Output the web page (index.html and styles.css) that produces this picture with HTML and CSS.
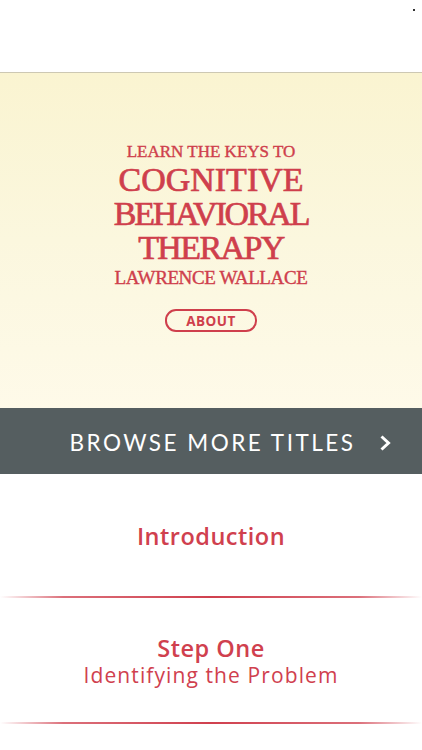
FILE: index.html
```html
<!DOCTYPE html>
<html>
<head>
<meta charset="utf-8">
<link rel="stylesheet" href="styles.css">
</head>
<body>
<div class="app">
  <header class="status"><span class="dot"></span></header>
  <section class="hero">
    <div class="title">
      <div class="t-small">LEARN THE KEYS TO</div>
      <div class="t-big t-cog">COGNITIVE</div>
      <div class="t-big t-beh">BEHAVIORAL</div>
      <div class="t-big t-the">THERAPY</div>
      <div class="t-author">LAWRENCE WALLACE</div>
    </div>
    <a class="about">ABOUT</a>
  </section>
  <a class="browse">
    <span class="browse-text">BROWSE MORE TITLES</span>
    <svg class="chev" width="13" height="16" viewBox="0 0 13 16"><path d="M2.5 1.5 L9.5 8 L2.5 14.5" fill="none" stroke="#ffffff" stroke-width="3" stroke-linejoin="miter"/></svg>
  </a>
  <ul class="chapters">
    <li class="chapter ch-intro"><span class="ch-title">Introduction</span></li>
    <li class="divider"></li>
    <li class="chapter ch-step"><span class="ch-title">Step One</span><span class="ch-sub">Identifying the Problem</span></li>
    <li class="divider"></li>
  </ul>
</div>
</body>
</html>
```

FILE: styles.css
```css
* { box-sizing: border-box; }
html, body { margin: 0; padding: 0; background: #ffffff; }
body { width: 422px; height: 750px; overflow: hidden; font-family: "Open Sans", "Liberation Sans", sans-serif; }
.app { width: 422px; }

.status { position: relative; height: 73px; background: #ffffff; border-bottom: 1px solid #cdc8b3; }
.dot { position: absolute; left: 413px; top: 9px; width: 2px; height: 2px; background: #333; }

.hero {
  height: 335px;
  background: linear-gradient(to bottom, #faf4d1 0%, #fbf7de 50%, #fefae9 100%);
  padding-top: 69px;
  text-align: center;
  color: #cf3f4c;
  font-family: "Liberation Serif", serif;
  -webkit-text-stroke: 0.4px #cf3f4c;
}
.t-small { font-size: 17px; line-height: 20px; letter-spacing: 0px; margin-bottom: 1px; }
.t-big { font-size: 34px; line-height: 34px; -webkit-text-stroke: 0.7px #cf3f4c; }
.t-cog { letter-spacing: 0px; }
.t-beh { letter-spacing: -2.2px; }
.t-the { letter-spacing: -1.6px; }
.t-author { font-size: 19px; line-height: 24px; letter-spacing: -0.4px; margin-top: 1px; }

.about {
  display: inline-flex; align-items: center; justify-content: center;
  margin-top: 19px;
  width: 92px; height: 23px;
  border: 2px solid #cf3f4c; border-radius: 11px;
  font-family: "Open Sans", "Liberation Sans", sans-serif;
  -webkit-text-stroke: 0;
  font-weight: 700; font-size: 13.5px; letter-spacing: 0.5px;
  color: #cf3f4c;
}

.browse {
  display: flex; align-items: center; justify-content: flex-end;
  height: 66px; background: #555e60;
  padding-right: 30px; padding-top: 3px; gap: 26px;
  color: #ffffff;
}
.browse-text { font-family: "Lato", "Liberation Sans", sans-serif; font-size: 22.5px; letter-spacing: 2.5px; font-weight: 400; margin-right: -2.5px; }
.chev { display: block; }

.chapters { list-style: none; margin: 0; padding: 0; }
.chapter {
  display: flex; flex-direction: column; align-items: center; justify-content: center;
  color: #d0404e; text-align: center;
}
.ch-intro { height: 122px; padding-top: 2px; }
.ch-step { height: 124px; padding-top: 3px; }
.ch-title { font-size: 23.5px; line-height: 27px; letter-spacing: 0.5px; font-weight: 600; }
.ch-sub { font-size: 21px; line-height: 26px; letter-spacing: 1.1px; font-weight: 400; }
.divider {
  height: 2px;
  background: linear-gradient(to right, rgba(208,64,78,0) 0%, rgba(208,64,78,0.75) 15%, #d0404e 50%, rgba(208,64,78,0.75) 85%, rgba(208,64,78,0) 100%);
}
```
